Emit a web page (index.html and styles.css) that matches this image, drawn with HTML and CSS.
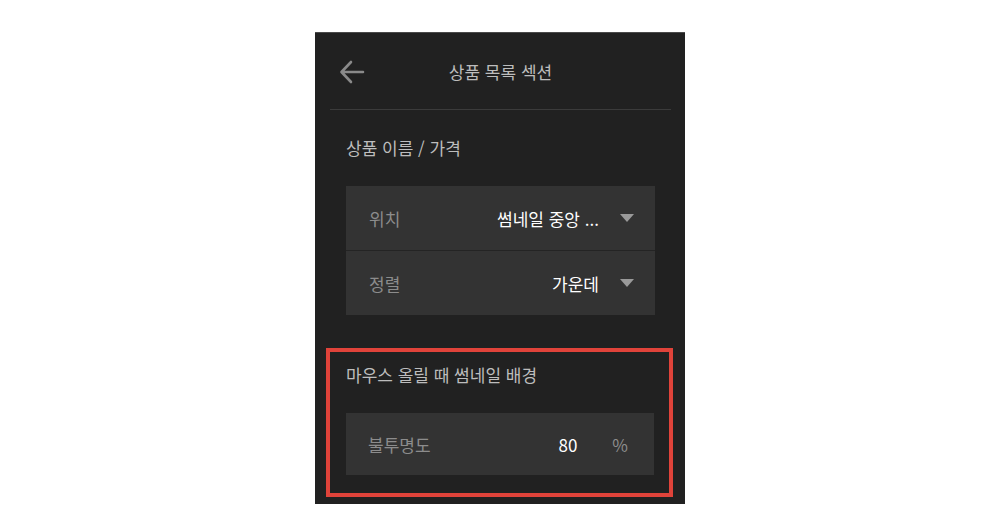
FILE: index.html
```html
<!DOCTYPE html>
<html lang="ko">
<head>
    <meta charset="UTF-8">
    <meta name="viewport" content="width=device-width, initial-scale=1.0">
    <title>상품 목록 섹션</title>
    <link rel="stylesheet" href="styles.css">
</head>
<body>
    <div class="panel">
        <!-- 상단 헤더 -->
        <div class="panel-header">
            <svg class="back-btn" width="26" height="24" viewBox="0 0 26 24">
                <path d="M24 12 H3 M12 2 L2.5 12 L12 22" fill="none" stroke="#8a8a8a" stroke-width="2.6" stroke-linecap="round" stroke-linejoin="round"/>
            </svg>
            <div class="panel-title">상품 목록 섹션</div>
        </div>

        <div class="section first">
            <div class="section-label">상품 이름 / 가격</div>
            <div class="card">
                <div class="row">
                    <span class="row-label">위치</span>
                    <span class="row-value">썸네일 중앙 ...</span>
                    <span class="caret"></span>
                </div>
                <div class="row">
                    <span class="row-label">정렬</span>
                    <span class="row-value">가운데</span>
                    <span class="caret"></span>
                </div>
            </div>
        </div>

        <!-- 강조 영역 -->
        <div class="section highlight">
            <div class="section-label">마우스 올릴 때 썸네일 배경</div>
            <div class="card">
                <div class="row short">
                    <span class="row-label">불투명도</span>
                    <span class="row-value num">80</span>
                    <span class="unit">%</span>
                </div>
            </div>
        </div>
    </div>
</body>
</html>
```

FILE: styles.css
```css
:root {
    --panel: #212121;
    --card: #333333;
    --line: #3b3b3b;
    --label: #bdbdbd;
    --muted: #8c8c8c;
    --accent: #e0433a;
}

body {
    margin: 0;
    background: #ffffff;
    font-family: 'Noto Sans CJK KR', 'Noto Sans', sans-serif;
}

.panel {
    width: 370px;
    margin: 32px auto 0;
    background: var(--panel);
    border-top: 1px solid #4a4a4a;
    padding: 0 14px 10px 15px;
    box-sizing: border-box;
    height: 472px;
}

.panel-header {
    height: 76px;
    border-bottom: 1px solid var(--line);
    display: flex;
    align-items: center;
    position: relative;
}

.back-btn {
    margin-left: 9px;
    margin-top: 1px;
}

.panel-title {
    position: absolute;
    left: 0;
    right: 0;
    text-align: center;
    color: var(--label);
    font-size: 17px;
    pointer-events: none;
}

.section {
    padding: 0 16px;
}

.section.first {
    padding-top: 26px;
}

.section-label {
    color: var(--label);
    font-size: 17px;
    line-height: 24px;
    margin-bottom: 26px;
}

.card {
    background: var(--card);
}

.row {
    height: 64px;
    display: flex;
    align-items: center;
    padding: 0 21px 0 23px;
}

.row + .row {
    border-top: 1px solid #242424;
}

.row.short {
    height: 62px;
    padding: 0 26px 0 22px;
}

.row-label {
    color: var(--muted);
    font-size: 17px;
    flex: 1;
}

.row-value {
    color: #ffffff;
    font-size: 17px;
}

.caret {
    width: 0;
    height: 0;
    margin-left: 21px;
    border-left: 7.5px solid transparent;
    border-right: 7.5px solid transparent;
    border-top: 8px solid #9a9a9a;
}

.unit {
    color: var(--muted);
    font-size: 17px;
    margin-left: 35px;
}

.section.highlight {
    margin-top: 37px;
    margin-right: 2px;
    padding: 11px 15px 18px 16px;
    outline: 4px solid var(--accent);
}
```
